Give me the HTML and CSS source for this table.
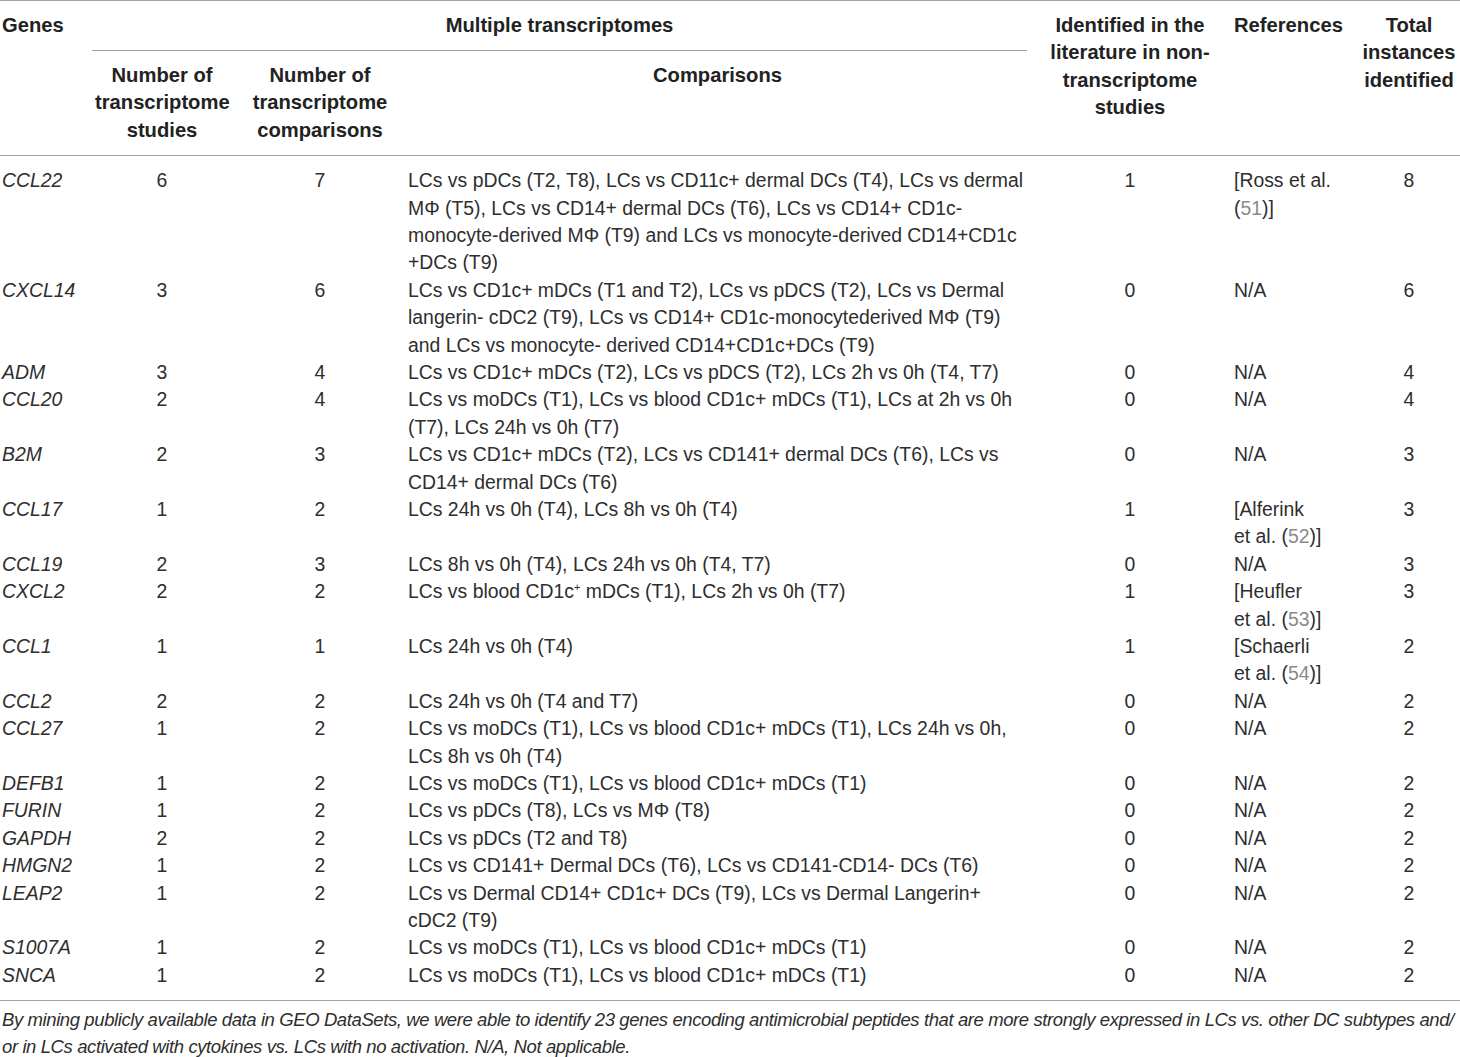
FILE: index.html
```html
<!DOCTYPE html>
<html lang="en">
<head>
<meta charset="utf-8">
<title>Table</title>
<link rel="stylesheet" href="styles.css">
</head>
<body>
<div class="wrap">
<table class="data">
  <colgroup>
    <col class="c-gene"><col class="c-stud"><col class="c-comp"><col class="c-list"><col class="c-lit"><col class="c-ref"><col class="c-tot">
  </colgroup>
  <thead>
    <tr class="h1">
      <th rowspan="2" class="left">Genes</th>
      <th colspan="3" class="multi">Multiple transcriptomes</th>
      <th rowspan="2">Identified in the literature in non-transcriptome studies</th>
      <th rowspan="2" class="left ref">References</th>
      <th rowspan="2">Total instances identified</th>
    </tr>
    <tr class="h2">
      <th>Number of transcriptome studies</th>
      <th>Number of transcriptome comparisons</th>
      <th>Comparisons</th>
    </tr>
  </thead>
  <tbody>
    <tr><td class="gene">CCL22</td><td>6</td><td>7</td><td class="list">LCs vs pDCs (T2, T8), LCs vs CD11c+ dermal DCs (T4), LCs vs dermal MΦ (T5), LCs vs CD14+ dermal DCs (T6), LCs vs CD14+ CD1c-monocyte-derived MΦ (T9) and LCs vs monocyte-derived CD14+CD1c +DCs (T9)</td><td>1</td><td class="ref">[Ross et al.<br>(<span class="cite">51</span>)]</td><td>8</td></tr>
    <tr><td class="gene">CXCL14</td><td>3</td><td>6</td><td class="list">LCs vs CD1c+ mDCs (T1 and T2), LCs vs pDCS (T2), LCs vs Dermal langerin- cDC2 (T9), LCs vs CD14+ CD1c-monocytederived MΦ (T9) and LCs vs monocyte- derived CD14+CD1c+DCs (T9)</td><td>0</td><td class="ref">N/A</td><td>6</td></tr>
    <tr><td class="gene">ADM</td><td>3</td><td>4</td><td class="list">LCs vs CD1c+ mDCs (T2), LCs vs pDCS (T2), LCs 2h vs 0h (T4, T7)</td><td>0</td><td class="ref">N/A</td><td>4</td></tr>
    <tr><td class="gene">CCL20</td><td>2</td><td>4</td><td class="list">LCs vs moDCs (T1), LCs vs blood CD1c+ mDCs (T1), LCs at 2h vs 0h (T7), LCs 24h vs 0h (T7)</td><td>0</td><td class="ref">N/A</td><td>4</td></tr>
    <tr><td class="gene">B2M</td><td>2</td><td>3</td><td class="list">LCs vs CD1c+ mDCs (T2), LCs vs CD141+ dermal DCs (T6), LCs vs CD14+ dermal DCs (T6)</td><td>0</td><td class="ref">N/A</td><td>3</td></tr>
    <tr><td class="gene">CCL17</td><td>1</td><td>2</td><td class="list">LCs 24h vs 0h (T4), LCs 8h vs 0h (T4)</td><td>1</td><td class="ref">[Alferink<br>et al. (<span class="cite">52</span>)]</td><td>3</td></tr>
    <tr><td class="gene">CCL19</td><td>2</td><td>3</td><td class="list">LCs 8h vs 0h (T4), LCs 24h vs 0h (T4, T7)</td><td>0</td><td class="ref">N/A</td><td>3</td></tr>
    <tr><td class="gene">CXCL2</td><td>2</td><td>2</td><td class="list">LCs vs blood CD1c<sup>+</sup> mDCs (T1), LCs 2h vs 0h (T7)</td><td>1</td><td class="ref">[Heufler<br>et al. (<span class="cite">53</span>)]</td><td>3</td></tr>
    <tr><td class="gene">CCL1</td><td>1</td><td>1</td><td class="list">LCs 24h vs 0h (T4)</td><td>1</td><td class="ref">[Schaerli<br>et al. (<span class="cite">54</span>)]</td><td>2</td></tr>
    <tr><td class="gene">CCL2</td><td>2</td><td>2</td><td class="list">LCs 24h vs 0h (T4 and T7)</td><td>0</td><td class="ref">N/A</td><td>2</td></tr>
    <tr><td class="gene">CCL27</td><td>1</td><td>2</td><td class="list">LCs vs moDCs (T1), LCs vs blood CD1c+ mDCs (T1), LCs 24h vs 0h, LCs 8h vs 0h (T4)</td><td>0</td><td class="ref">N/A</td><td>2</td></tr>
    <tr><td class="gene">DEFB1</td><td>1</td><td>2</td><td class="list">LCs vs moDCs (T1), LCs vs blood CD1c+ mDCs (T1)</td><td>0</td><td class="ref">N/A</td><td>2</td></tr>
    <tr><td class="gene">FURIN</td><td>1</td><td>2</td><td class="list">LCs vs pDCs (T8), LCs vs MΦ (T8)</td><td>0</td><td class="ref">N/A</td><td>2</td></tr>
    <tr><td class="gene">GAPDH</td><td>2</td><td>2</td><td class="list">LCs vs pDCs (T2 and T8)</td><td>0</td><td class="ref">N/A</td><td>2</td></tr>
    <tr><td class="gene">HMGN2</td><td>1</td><td>2</td><td class="list">LCs vs CD141+ Dermal DCs (T6), LCs vs CD141-CD14- DCs (T6)</td><td>0</td><td class="ref">N/A</td><td>2</td></tr>
    <tr><td class="gene">LEAP2</td><td>1</td><td>2</td><td class="list">LCs vs Dermal CD14+ CD1c+ DCs (T9), LCs vs Dermal Langerin+ cDC2 (T9)</td><td>0</td><td class="ref">N/A</td><td>2</td></tr>
    <tr><td class="gene">S1007A</td><td>1</td><td>2</td><td class="list">LCs vs moDCs (T1), LCs vs blood CD1c+ mDCs (T1)</td><td>0</td><td class="ref">N/A</td><td>2</td></tr>
    <tr><td class="gene">SNCA</td><td>1</td><td>2</td><td class="list">LCs vs moDCs (T1), LCs vs blood CD1c+ mDCs (T1)</td><td>0</td><td class="ref">N/A</td><td>2</td></tr>
  </tbody>
</table>
<p class="foot">By mining publicly available data in GEO DataSets, we were able to identify 23 genes encoding antimicrobial peptides that are more strongly expressed in LCs vs. other DC subtypes and/<br>or in LCs activated with cytokines vs. LCs with no activation. N/A, Not applicable.</p>
</div>
</body>
</html>
```

FILE: styles.css
```css
html, body {
  margin: 0;
  padding: 0;
  background: #fff;
}
.wrap {
  width: 1460px;
  font-family: "Liberation Sans", Arial, sans-serif;
  color: #2e2e2e;
}
.data {
  width: 1460px;
  border-collapse: collapse;
  table-layout: fixed;
  font-size: 19.4px;
  line-height: 27.4px;
}
.c-gene { width: 92px; }
.c-stud { width: 140px; }
.c-comp { width: 176px; }
.c-list { width: 619px; }
.c-lit  { width: 206px; }
.c-ref  { width: 125px; }
.c-tot  { width: 102px; }

.data thead {
  border-top: 1px solid #a3a3a3;
  border-bottom: 1px solid #a3a3a3;
}
.data th {
  font-weight: bold;
  font-size: 20.2px;
  color: #222;
  text-align: center;
  vertical-align: top;
  padding: 0 3px;
}
.h1 th { padding-top: 11px; padding-bottom: 10.6px; }
.h2 th { padding-top: 11px; padding-bottom: 10.6px; }
.data th.left { text-align: left; padding-left: 2px; }
.data th.ref { padding-left: 1px; }
.data th.multi { border-bottom: 1px solid #a3a3a3; }

.data td {
  text-align: center;
  vertical-align: top;
  padding: 0;
}
.data tbody tr:first-child td { padding-top: 11.3px; }
.data tbody tr:last-child td { padding-bottom: 10.3px; }
.data tbody { border-bottom: 1px solid #a3a3a3; }
.data td.gene { text-align: left; font-style: italic; padding-left: 2px; }
.data td.list { text-align: left; padding-right: 1px; }
.data td.ref { text-align: left; padding-left: 1px; white-space: nowrap; }
.cite { color: #8a8a8a; }
sup { font-size: 11px; line-height: 0; vertical-align: 7px; }

.foot {
  margin: 0;
  padding: 5.5px 0 0 2px;
  font-style: italic;
  font-size: 18.5px;
  letter-spacing: -0.4px;
  line-height: 27px;
  white-space: nowrap;
  color: #2e2e2e;
}
```
